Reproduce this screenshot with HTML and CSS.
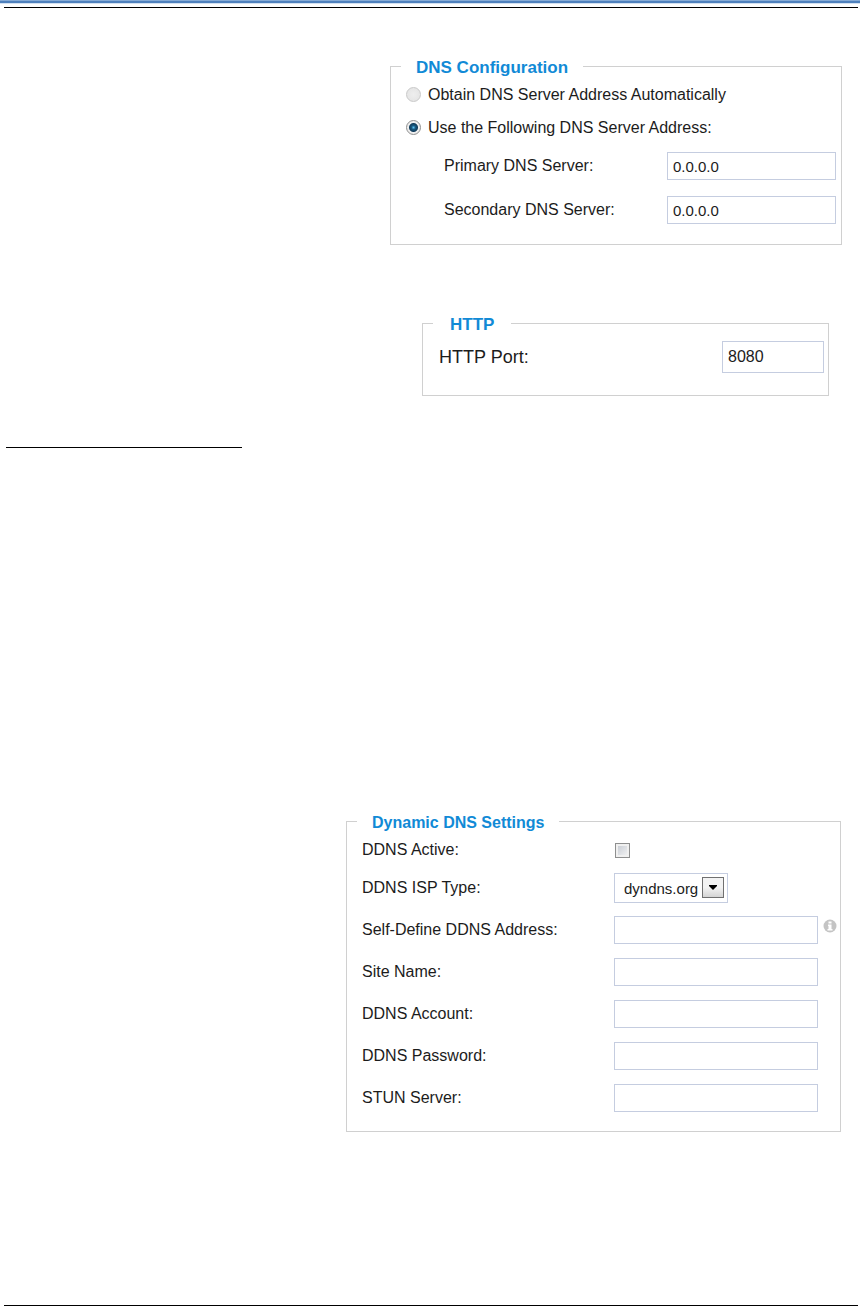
FILE: index.html
```html
<!DOCTYPE html>
<html lang="en">
<head>
  <meta charset="UTF-8">
  <title>Network Settings</title>
  <meta name="viewport" content="width=device-width, initial-scale=1.0">
  <link rel="stylesheet" href="styles.css">
</head>
<body>
  <header class="page-header">
    <div class="bar"></div>
    <hr class="rule">
  </header>

  <main>
    <form>
      <fieldset class="dns">
        <legend>DNS Configuration</legend>
        <div class="radio-row">
          <input type="radio" name="dns" id="dnsAuto" disabled>
          <label for="dnsAuto">Obtain DNS Server Address Automatically</label>
        </div>
        <div class="radio-row">
          <input type="radio" name="dns" id="dnsManual" checked>
          <label for="dnsManual">Use the Following DNS Server Address:</label>
        </div>
        <div class="row">
          <label for="primaryDns">Primary DNS Server:</label>
          <input type="text" id="primaryDns" value="0.0.0.0">
        </div>
        <div class="row">
          <label for="secondaryDns">Secondary DNS Server:</label>
          <input type="text" id="secondaryDns" value="0.0.0.0">
        </div>
      </fieldset>

      <fieldset class="http">
        <legend>HTTP</legend>
        <div class="row">
          <label for="httpPort">HTTP Port:</label>
          <input type="text" id="httpPort" value="8080">
        </div>
      </fieldset>

      <hr class="section-line">

      <fieldset class="ddns">
        <legend>Dynamic DNS Settings</legend>
        <div class="row active-row">
          <label for="ddnsActive">DDNS Active:</label>
          <input type="checkbox" id="ddnsActive">
        </div>
        <div class="row">
          <label for="ispType">DDNS ISP Type:</label>
          <span class="select">
            <select id="ispType">
              <option>dyndns.org</option>
            </select>
            <span class="arrow">
              <svg width="8" height="5" viewBox="0 0 8 5"><path d="M0 0h8v1L4 5 0 1z"/></svg>
            </span>
          </span>
        </div>
        <div class="row">
          <label for="ddnsAddress">Self-Define DDNS Address:</label>
          <input type="text" id="ddnsAddress">
          <svg class="info" width="14" height="14" viewBox="0 0 14 14">
            <circle cx="7" cy="7" r="6.5" fill="#c4c4c4"/>
            <path d="M5.5 2.5h3v2h-3zM5 5.5h3.5V10H9.5v1.5h-5V10h1V7H5z" fill="#fff"/>
          </svg>
        </div>
        <div class="row">
          <label for="siteName">Site Name:</label>
          <input type="text" id="siteName">
        </div>
        <div class="row">
          <label for="ddnsAccount">DDNS Account:</label>
          <input type="text" id="ddnsAccount">
        </div>
        <div class="row">
          <label for="ddnsPassword">DDNS Password:</label>
          <input type="password" id="ddnsPassword">
        </div>
        <div class="row">
          <label for="stunServer">STUN Server:</label>
          <input type="text" id="stunServer">
        </div>
      </fieldset>
    </form>
  </main>

  <hr class="rule bottom">
</body>
</html>
```

FILE: styles.css
```css
* {
  box-sizing: border-box;
}
body {
  margin: 0;
  min-height: 100vh;
  display: flex;
  flex-direction: column;
  font-family: "Liberation Sans", Arial, sans-serif;
  font-size: 16px;
  line-height: 20px;
  color: #1c1c1c;
  background: #fff;
}
hr {
  border: none;
  height: 1px;
  background: #000;
}
.bar {
  height: 4px;
  margin-right: 1px;
  border-top: 1px solid #86abd6;
  border-bottom: 1px solid #d3e1f1;
  background: #4f81bd;
}
.rule {
  margin: 3px 3px 0 4px;
}
.bottom {
  margin-top: auto;
}

/* settings panels, lined up on the right side of the page */
fieldset {
  min-width: 0;
  margin: 0 20px 0 auto;
  padding: 0;
  border: 1px solid #d0d0d0;
}
legend {
  margin-left: 10px;
  padding: 4px 15px 0;
  font-weight: bold;
  color: #118ad6;
}
.row {
  display: flex;
  align-items: center;
}
.row label {
  flex: 1;
}
input[type="text"],
input[type="password"] {
  height: 28px;
  padding: 0 5px;
  border: 1px solid #c5cde0;
  background: #fff;
  font-family: inherit;
  font-size: 15px;
  color: #1c1c1c;
}

/* DNS */
.dns {
  max-width: 452px;
  margin-top: 46px;
  margin-right: 19px;
  padding: 0 5px 12px 15px;
}
.dns legend {
  margin-left: -5px;
  font-size: 17px;
}
.radio-row {
  display: flex;
  align-items: center;
  gap: 7px;
  height: 33px;
}
.dns .row {
  height: 44px;
  padding-left: 38px;
}
.dns .row input {
  width: 169px;
}
input[type="radio"] {
  appearance: none;
  width: 15px;
  height: 15px;
  margin: 0;
  border: 1px solid #8f8f8f;
  border-radius: 50%;
  background: #eee;
}
input[type="radio"]:checked {
  background: radial-gradient(circle, #5fc0ee 0, #17587f 2px, #123d5c 4px, #eee 5px);
}
input[type="radio"]:disabled {
  border-color: #c9c9c9;
  background: radial-gradient(circle, #eee, #e2e2e2);
}

/* HTTP */
.http {
  max-width: 407px;
  margin-top: 66px;
  margin-right: 32px;
  padding: 6px 4px 22px 16px;
}
.http legend {
  margin-left: -6px;
  padding: 4px 17px 0;
  font-size: 17px;
}
.http label {
  font-size: 18px;
}
.http .row input {
  width: 102px;
  height: 32px;
  font-size: 16px;
}

.section-line {
  width: 236px;
  margin: 51px 0 0 6px;
}

/* Dynamic DNS */
.ddns {
  max-width: 495px;
  margin-top: 361px;
  padding: 0 22px 12px 15px;
}
.ddns legend {
  margin-left: -5px;
}
.ddns .row {
  position: relative;
  height: 42px;
}
.ddns .active-row {
  height: 34px;
}
.ddns .row label {
  flex: 0 0 252px;
}
.ddns .row > input:not([type="checkbox"]) {
  flex: 1;
  min-width: 0;
}
input[type="checkbox"] {
  appearance: none;
  width: 15px;
  height: 15px;
  margin: 0 1px;
  border: 1px solid #8e8f8f;
  background: linear-gradient(135deg, #c3c8d0, #f6f6f6);
  box-shadow: inset 0 0 0 2px #f0f0f0;
}
.select {
  position: relative;
}
select {
  display: block;
  appearance: none;
  width: 114px;
  height: 30px;
  padding: 0 28px 0 9px;
  border: 1px solid #c5cde0;
  border-radius: 0;
  background: #fff;
  font-family: inherit;
  font-size: 15px;
  color: #1c1c1c;
}
.arrow {
  position: absolute;
  top: 4px;
  right: 4px;
  display: flex;
  align-items: center;
  justify-content: center;
  width: 22px;
  height: 21px;
  border: 1px solid #707070;
  background: linear-gradient(#f3f3f3 50%, #d4d4d4);
  pointer-events: none;
}
.info {
  position: absolute;
  top: 10px;
  right: -19px;
}
```
